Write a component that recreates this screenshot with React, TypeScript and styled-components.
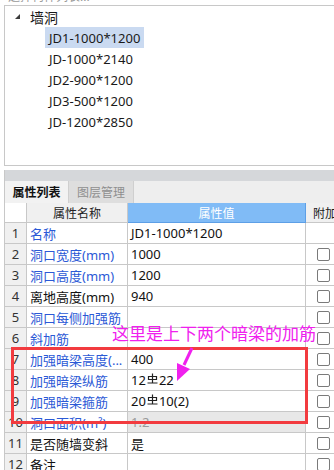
import React from "react";
import styled, { createGlobalStyle } from "styled-components";

const GlobalStyle = createGlobalStyle`
  body {
    margin: 0;
    background: #fff;
    font-family: "Noto Sans", "Noto Sans CJK SC", sans-serif;
    color: #1a1a1a;
  }
`;

const Page = styled.div`
  position: relative;
  width: 334px;
  height: 470px;
  overflow: hidden;
  background: #fff;
`;

/* 上方被截掉的标题 */
const CaptionClip = styled.div`
  height: 5px;
  overflow: hidden;
  padding-left: 8px;
`;

const CaptionText = styled.div`
  margin-top: -10px;
  font-size: 12px;
  line-height: 14px;
  color: #9a9a9a;
`;

const TreePanel = styled.div`
  margin-left: 4px;
  height: 161px;
  box-sizing: border-box;
  border: 1px solid #c8c8c8;
  border-right: none;
`;

const TreeHead = styled.div`
  height: 21px;
  display: flex;
  align-items: center;
  padding-left: 10px;
  font-size: 14px;
`;

const Triangle = styled.span`
  width: 0;
  height: 0;
  border-left: 5px solid transparent;
  border-bottom: 5px solid #3c3c3c;
  margin-right: 10px;
`;

const TreeItem = styled.div<{ selected?: boolean }>`
  height: 21px;
  margin-left: 40px;
  padding: 0 4px;
  width: fit-content;
  display: flex;
  align-items: center;
  font-size: 13px;
  background: ${({ selected }) => (selected ? "#cadaf1" : "transparent")};
`;

const PropertyPanel = styled.div`
  margin-top: 4px;
  margin-left: 4px;
  border-left: 1px solid #c8c8c8;
`;

const GreyBar = styled.div`
  height: 11px;
  background: #d5d7da;
`;

const TabRow = styled.div`
  height: 22px;
  display: flex;
  background: #eeeeee;
`;

const Tab = styled.div<{ active?: boolean }>`
  width: ${({ active }) => (active ? "64px" : "65px")};
  display: flex;
  align-items: center;
  justify-content: center;
  font-size: 12px;
  box-sizing: border-box;
  border-right: 1px solid #cfcfcf;
  background: ${({ active }) => (active ? "#f2f2f2" : "#dedede")};
  color: ${({ active }) => (active ? "#111" : "#8f8f8f")};
  font-weight: ${({ active }) => (active ? 600 : 400)};
`;

const Row = styled.div<{ head?: boolean }>`
  display: grid;
  grid-template-columns: 22px 101px 178px 1fr;
  height: ${({ head }) => (head ? "20px" : "21px")};
`;

const Cell = styled.div<{ tone?: "num" | "head" | "blue" | "dim" | "plain" }>`
  box-sizing: border-box;
  border-right: 1px solid #c8c8c8;
  border-bottom: 1px solid #c8c8c8;
  display: flex;
  align-items: center;
  font-size: 13px;
  white-space: nowrap;
  overflow: hidden;
  padding-left: 3px;
  background: ${({ tone }) =>
    tone === "num" || tone === "head"
      ? "#f0f0f0"
      : tone === "blue"
      ? "#80bbf6"
      : tone === "dim"
      ? "#e8e8e8"
      : "#fff"};
`;

const NumCell = styled(Cell)`
  justify-content: center;
  padding-left: 0;
  color: #333;
`;

const HeadCell = styled(Cell)`
  justify-content: center;
  padding-left: 0;
  font-size: 12px;
  color: ${({ tone }) => (tone === "blue" ? "#fff" : "#222")};
  border-color: ${({ tone }) => (tone === "blue" ? "#5d9fe6" : "#c8c8c8")};
`;

const ExtraHead = styled(Cell)`
  padding-left: 7px;
  font-size: 12px;
  border-right: none;
`;

const NameText = styled.span<{ link?: boolean }>`
  color: ${({ link }) => (link ? "#2b59d6" : "#111")};
`;

const ValueText = styled.span<{ dim?: boolean }>`
  color: ${({ dim }) => (dim ? "#9a9a9a" : "#111")};
  display: flex;
  align-items: center;
`;

const CheckCell = styled(Cell)`
  padding-left: 11px;
  border-right: none;
`;

const Check = styled.span`
  width: 13px;
  height: 13px;
  box-sizing: border-box;
  border: 1px solid #7a7a7a;
  border-radius: 2px;
  background: #fff;
`;

const RedBox = styled.div`
  position: absolute;
  left: 11px;
  top: 347px;
  width: 297px;
  height: 77px;
  box-sizing: border-box;
  border: 3px solid #f23b3f;
  pointer-events: none;
`;

const Note = styled.div`
  position: absolute;
  left: 112px;
  top: 323px;
  font-size: 17px;
  line-height: 22px;
  color: #f020ee;
  white-space: nowrap;
`;

const Arrow = styled.svg`
  position: absolute;
  left: 170px;
  top: 340px;
`;

const RebarMark = () => (
  <svg width="11" height="11" viewBox="0 0 11 11" style={{ margin: "0 1px 3px" }}>
    <path d="M5.5 0.5V10.5M1.5 3.5H9.5V6.5H1.5ZM0.5 10H10.5" stroke="#222" strokeWidth="1.2" fill="none" />
  </svg>
);

type Prop = {
  name: string;
  link: boolean;
  value: React.ReactNode;
  dim?: boolean;
  check: boolean;
};

const props: Prop[] = [
  { name: "名称", link: true, value: "JD1-1000*1200", check: false },
  { name: "洞口宽度(mm)", link: true, value: "1000", check: true },
  { name: "洞口高度(mm)", link: true, value: "1200", check: true },
  { name: "离地高度(mm)", link: false, value: "940", check: true },
  { name: "洞口每侧加强筋", link: true, value: "", check: true },
  { name: "斜加筋", link: true, value: "", check: true },
  { name: "加强暗梁高度(...", link: true, value: "400", check: true },
  {
    name: "加强暗梁纵筋",
    link: true,
    value: (
      <>
        12<RebarMark />22
      </>
    ),
    check: true,
  },
  {
    name: "加强暗梁箍筋",
    link: true,
    value: (
      <>
        20<RebarMark />10(2)
      </>
    ),
    check: true,
  },
  { name: "洞口面积(m²)", link: true, value: "1.2", dim: true, check: true },
  { name: "是否随墙变斜", link: false, value: "是", check: true },
  { name: "备注", link: false, value: "", check: true },
];

const treeItems = [
  "JD1-1000*1200",
  "JD-1000*2140",
  "JD2-900*1200",
  "JD3-500*1200",
  "JD-1200*2850",
];

const App = () => {
  return (
    <Page>
      <GlobalStyle />
      <CaptionClip>
        <CaptionText>选择构件列表...</CaptionText>
      </CaptionClip>

      <TreePanel>
        <TreeHead>
          <Triangle />
          墙洞
        </TreeHead>
        {treeItems.map((item, i) => (
          <TreeItem key={item} selected={i === 0}>
            {item}
          </TreeItem>
        ))}
      </TreePanel>

      <PropertyPanel>
        <GreyBar />
        <TabRow>
          <Tab active>属性列表</Tab>
          <Tab>图层管理</Tab>
        </TabRow>

        <Row head>
          <HeadCell tone="plain" />
          <HeadCell tone="head">属性名称</HeadCell>
          <HeadCell tone="blue">属性值</HeadCell>
          <ExtraHead tone="head">附加</ExtraHead>
        </Row>

        {props.map((p, i) => (
          <Row key={p.name}>
            <NumCell tone="num">{i + 1}</NumCell>
            <Cell>
              <NameText link={p.link}>{p.name}</NameText>
            </Cell>
            <Cell tone={p.dim ? "dim" : "plain"}>
              <ValueText dim={p.dim}>{p.value}</ValueText>
            </Cell>
            <CheckCell>{p.check && <Check />}</CheckCell>
          </Row>
        ))}
      </PropertyPanel>

      <RedBox />
      <Note>这里是上下两个暗梁的加筋</Note>
      <Arrow width="30" height="45" viewBox="0 0 30 45">
        <path d="M22 8L14 25" stroke="#f020ee" strokeWidth="3" />
        <polygon points="7,41 7,23 20,29" fill="#f020ee" />
      </Arrow>
    </Page>
  );
};

export default App;
